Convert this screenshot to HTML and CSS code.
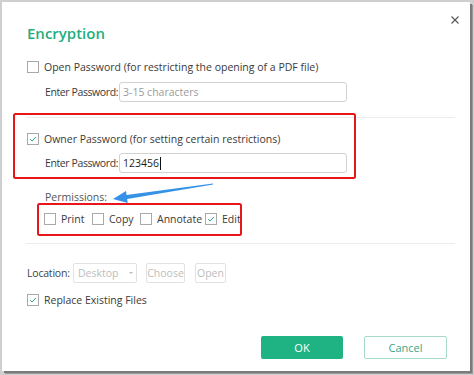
FILE: index.html
```html
<!DOCTYPE html>
<html>
<head>
<meta charset="utf-8">
<link rel="stylesheet" href="styles.css">
</head>
<body>
<div class="dialog">
  <div class="header">
    <div class="title">Encryption</div>
    <div class="close">
      <svg width="8" height="8" viewBox="0 0 8 8"><path d="M0.5 0.5L7.5 7.5M7.5 0.5L0.5 7.5" stroke="#555" stroke-width="1.1" fill="none"/></svg>
    </div>
  </div>

  <div class="row check-row r-open">
    <span class="cb"></span><span class="lbl">Open Password (for restricting the opening of a PDF file)</span>
  </div>
  <div class="row field-row r-enter1">
    <span class="field-lbl">Enter Password:</span>
    <div class="input placeholder">3-15 characters</div>
  </div>

  <div class="sep s1"></div>

  <div class="row check-row r-owner">
    <span class="cb checked"><svg viewBox="0 0 12 12"><path d="M2.6 6.2L4.9 8.4L9.4 3.6" stroke="#2aa877" stroke-width="1.2" fill="none"/></svg></span><span class="lbl">Owner Password (for setting certain restrictions)</span>
  </div>
  <div class="row field-row r-enter2">
    <span class="field-lbl">Enter Password:</span>
    <div class="input value">123456<span class="caret"></span></div>
  </div>

  <div class="row perm-label">Permissions:</div>
  <div class="row perm-row">
    <div class="perm p-print"><span class="cb"></span><span class="lbl">Print</span></div>
    <div class="perm p-copy"><span class="cb"></span><span class="lbl">Copy</span></div>
    <div class="perm p-annot"><span class="cb"></span><span class="lbl">Annotate</span></div>
    <div class="perm p-edit"><span class="cb checked"><svg viewBox="0 0 12 12"><path d="M2.6 6.2L4.9 8.4L9.4 3.6" stroke="#2aa877" stroke-width="1.2" fill="none"/></svg></span><span class="lbl">Edit</span></div>
  </div>

  <div class="sep s2"></div>

  <div class="row loc-row">
    <span class="loc-lbl">Location:</span>
    <div class="select">Desktop<span class="arrow-down"></span></div>
    <div class="dbtn choose">Choose</div>
    <div class="dbtn open">Open</div>
  </div>

  <div class="row check-row r-replace">
    <span class="cb checked"><svg viewBox="0 0 12 12"><path d="M2.6 6.2L4.9 8.4L9.4 3.6" stroke="#2aa877" stroke-width="1.2" fill="none"/></svg></span><span class="lbl">Replace Existing Files</span>
  </div>

  <div class="row btn-row">
    <div class="btn ok">OK</div>
    <div class="btn cancel">Cancel</div>
  </div>
</div>

<svg class="overlay" width="474" height="375" viewBox="0 0 474 375">
  <rect x="14" y="114" width="341" height="64" rx="1.5" fill="none" stroke="#e8161b" stroke-width="2"/>
  <rect x="38" y="204" width="203" height="31" rx="1.5" fill="none" stroke="#e8161b" stroke-width="2"/>
  <polygon points="113,199 127.7,202.9 127.15,198.9 213.07,184.5 212.93,183.5 126.55,194.96 126,191" fill="#3592e6"/>
</svg>
</body>
</html>
```

FILE: styles.css
```css
* { box-sizing: border-box; }
html, body { margin: 0; padding: 0; }
body {
  width: 474px;
  height: 375px;
  background: #cfcfcf;
  position: relative;
  overflow: hidden;
  font-family: "Open Sans", "Noto Sans", sans-serif;
  font-size: 10.5px;
  color: #3a3a3a;
}
.dialog {
  margin: 2px 0 0 2px;
  width: 468px;
  height: 369px;
  background: #fff;
  box-shadow: 2px 2px 0 #7a7a7a, 3px 3px 0 #9a9a9a;
  padding: 0 15px 0 25px;
  display: flex;
  flex-direction: column;
}
.header {
  display: flex;
  justify-content: space-between;
  align-items: flex-start;
  height: 44px;
  flex: none;
}
.title {
  margin-top: 19px;
  height: 24px;
  line-height: 24px;
  font-size: 15px;
  font-weight: 600;
  color: #1fae7f;
}
.close {
  margin-top: 14px;
  margin-right: -4px;
  width: 8px;
  height: 8px;
  line-height: 0;
}
.row {
  display: flex;
  align-items: center;
  flex: none;
}
.check-row { height: 16px; }
.cb {
  width: 12px;
  height: 12px;
  border: 1px solid #a9a9a9;
  background: #fff;
  flex: none;
  margin-right: 5px;
  display: block;
  line-height: 0;
}
.cb svg { width: 10px; height: 10px; display: block; }
.lbl { white-space: nowrap; }
.r-open { margin-top: 13px; }
.field-row { height: 20px; padding-left: 18px; }
.r-enter1 { margin-top: 7px; }
.field-lbl { width: 74px; flex: none; white-space: nowrap; letter-spacing: -0.4px; }
.input {
  width: 228px;
  height: 20px;
  border: 1px solid #d2d2d2;
  border-radius: 3px;
  padding-left: 3px;
  line-height: 18px;
  display: flex;
  align-items: center;
}
.placeholder { color: #9b9b9b; }
.value { color: #1e1e1e; }
.caret { width: 1px; height: 13px; background: #111; margin-left: 1px; }
.sep { height: 1px; background: #ececec; margin-left: -1px; width: 429px; flex: none; }
.s1 { margin-top: 15px; }
.r-owner { margin-top: 13px; }
.r-enter2 { margin-top: 6px; }
.perm-label { margin-top: 16px; height: 16px; padding-left: 18px; color: #555; }
.perm-row { margin-top: 6px; height: 16px; padding-left: 17px; }
.perm { display: flex; align-items: center; flex: none; }
.p-print, .p-copy { width: 48px; }
.p-annot { width: 65px; }
.s2 { margin-top: 16px; }
.loc-row { margin-top: 19px; height: 20px; }
.loc-lbl { width: 46px; flex: none; color: #444; letter-spacing: -0.2px; }
.select {
  width: 64px;
  height: 20px;
  border: 1px solid #e2e2e2;
  border-radius: 2px;
  color: #bdbdbd;
  padding-left: 4px;
  display: flex;
  align-items: center;
  justify-content: space-between;
  padding-right: 3px;
}
.arrow-down {
  width: 0; height: 0;
  border-left: 2px solid transparent;
  border-right: 2px solid transparent;
  border-top: 2px solid #bbb;
}
.dbtn {
  height: 20px;
  border: 1px solid #e2e2e2;
  border-radius: 2px;
  color: #bdbdbd;
  display: flex;
  align-items: center;
  justify-content: center;
}
.choose { width: 39px; margin-left: 9px; }
.open { width: 31px; margin-left: 10px; }
.r-replace { margin-top: 9px; }
.btn-row { margin-top: 28px; height: 23px; justify-content: flex-end; gap: 21px; padding-right: 8px; }
.btn {
  width: 82px;
  height: 23px;
  border-radius: 2px;
  display: flex;
  align-items: center;
  justify-content: center;
  font-size: 11px;
}
.ok { background: #1fb384; color: #fff; }
.cancel { width: 83px; border: 1px solid #a6dbc9; color: #3aa585; background: #fff; }
.overlay { position: absolute; left: 0; top: 0; pointer-events: none; }
```
